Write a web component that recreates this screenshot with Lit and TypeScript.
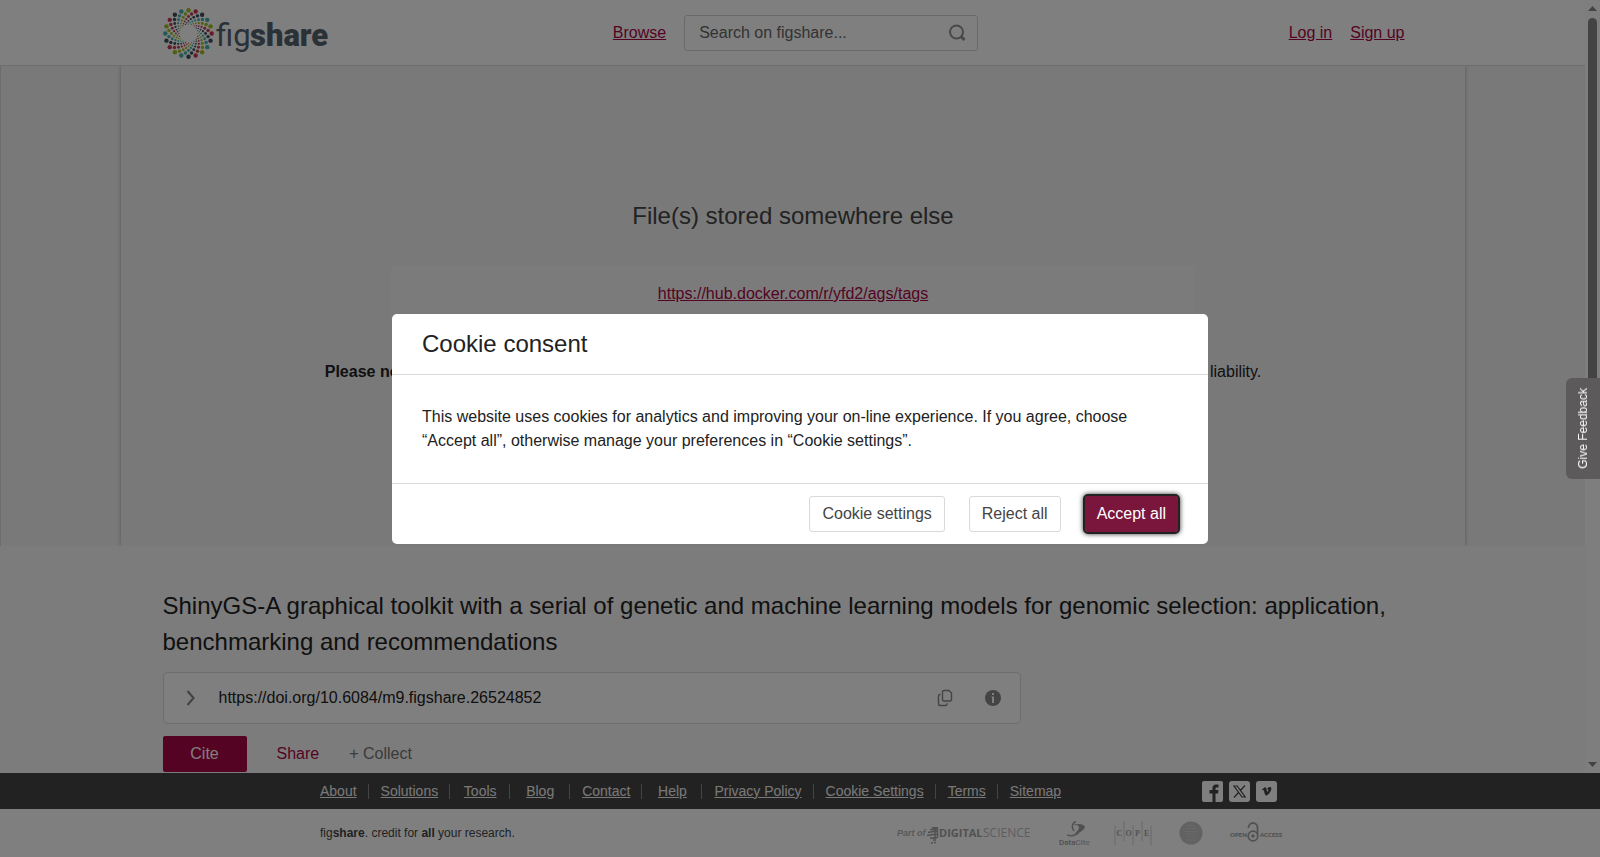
import { LitElement, html, css, svg } from "lit";
import { customElement } from "lit/decorators.js";

const WHEEL_COLORS = ["#a3c01c", "#c93a4e", "#3e4f5e", "#45b3ad"];
const RINGS = [
  { r: 23.2, dot: 2.2 },
  { r: 19.8, dot: 1.7 },
  { r: 17, dot: 1.4 },
  { r: 14.6, dot: 1.1 },
  { r: 12.6, dot: 0.9 },
  { r: 10.9, dot: 0.7 },
  { r: 9.5, dot: 0.6 },
];

@customElement("figshare-logo")
export class FigshareLogo extends LitElement {
  static styles = css`
    :host { display: block; line-height: 0; }
    .light { font: 400 31px Roboto, sans-serif; fill: #55636f; }
    .bold { font: 900 31px Roboto, sans-serif; fill: #55636f; }
  `;

  render() {
    const dots = RINGS.flatMap((ring, k) =>
      Array.from({ length: 20 }, (_, i) => {
        const a = ((i * 18 - k * 9) * Math.PI) / 180;
        return svg`<circle
          cx=${(25.5 + ring.r * Math.sin(a)).toFixed(2)}
          cy=${(26.5 - ring.r * Math.cos(a)).toFixed(2)}
          r=${ring.dot} fill=${WHEEL_COLORS[i % 4]}></circle>`;
      })
    );
    return html`<svg width="170" height="52" viewBox="0 0 170 52" role="img" aria-label="figshare">
      ${dots}
      <text class="light" x="53" y="39">fig</text>
      <text class="bold" x="87" y="39">share</text>
    </svg>`;
  }
}

@customElement("partner-logos")
export class PartnerLogos extends LitElement {
  static styles = css`
    :host { display: flex; align-items: center; }
    svg { display: block; overflow: visible; }
    .ds { margin-right: 25px; }
    .dc { margin-right: 22px; }
    .cope { margin-right: 27px; }
    .seal { margin-right: 27px; }
    .it { font: italic 700 9px "Liberation Sans", sans-serif; fill: #b4b4b4; }
    .dig { font: 700 11px "Open Sans", sans-serif; fill: #a3a3a3; }
    .sci { font: 400 12px "Open Sans", sans-serif; fill: #bcbcbc; }
    .data { font: 500 8px Roboto, sans-serif; fill: #a0a0a0; }
    .cite { fill: #bababa; }
    .serif { font: 700 8px "Liberation Serif", serif; fill: #a6a6a6; }
    .oa { font: 800 6px Lato, sans-serif; fill: #a3a3a3; }
  `;

  render() {
    return html`
      <svg class="ds" width="137" height="26" viewBox="0 0 137 26" role="img" aria-label="Part of Digital Science">
        <text class="it" x="0" y="16">Part of</text>
        <g stroke="#a3a3a3" stroke-width="1.4" fill="none">
          <path d="M33 9.5h8M31 12.5l5-1h5M30 15.5l6-1h5M33 18h7M36 20h3M34 23h2M37 22.5h2M35 7.800h6"></path>
          <path d="M38 8v11M40.5 8v10"></path>
        </g>
        <text class="dig" x="42" y="17">DIGITAL</text>
        <text class="sci" x="86" y="17">SCIENCE</text>
      </svg>
      <svg class="dc" width="33" height="27" viewBox="0 0 33 27" role="img" aria-label="DataCite">
        <path d="M17 1.5c-4 1.500-5 6-2 9.500" fill="none" stroke="#a0a0a0" stroke-width="1.600"></path>
        <path d="M14 5c5-2 11-1 12 2-1 3.500-7 6.500-11 8 2-3 5-5 5-7.500s-3-2.500-6-2.500z" fill="#a0a0a0"></path>
        <path d="M8 15c4 1.500 9 .5 12-2.500" fill="none" stroke="#a8a8a8" stroke-width="1.500"></path>
        <text class="data" x="0" y="25">Data<tspan class="cite">Cite</tspan></text>
      </svg>
      <svg class="cope" width="38" height="26" viewBox="0 0 38 26" role="img" aria-label="COPE">
        <path d="M1 5.500v20M10 1v20M19 5.500v20M28 1v20M37 5.500v20" stroke="#d2d2d2" stroke-width="1"></path>
        <text class="serif" x="2.500" y="16">C</text>
        <text class="serif" x="11.500" y="16">O</text>
        <text class="serif" x="21" y="16">P</text>
        <text class="serif" x="30" y="16">E</text>
      </svg>
      <svg class="seal" width="24" height="26" viewBox="0 0 24 26" role="img" aria-label="Data seal">
        <circle cx="12" cy="13" r="11.500" fill="#c4c4c4"></circle>
        <path d="M9 5.500h6M7.500 8.500h9M5.500 11.500h13M5.500 14h13M8 17h8M7 20h10" stroke="#d6d6d6" stroke-width="1.200" stroke-dasharray="2 .6"></path>
      </svg>
      <svg width="50" height="26" viewBox="0 0 50 26" role="img" aria-label="Open Access">
        <text class="oa" x="0" y="17">OPEN</text>
        <g fill="none" stroke="#a3a3a3" stroke-width="1.800">
          <circle cx="23" cy="16" r="4.800"></circle>
          <path d="M18.500 8V7.500a4.500 4.500 0 0 1 9 0V14"></path>
        </g>
        <circle cx="23" cy="16" r="1.800" fill="#a3a3a3"></circle>
        <text class="oa" x="30" y="17">ACCESS</text>
      </svg>
    `;
  }
}

@customElement("cookie-dialog")
export class CookieDialog extends LitElement {
  static styles = css`
    :host {
      position: fixed; inset: 0; display: grid; place-items: center;
      background: rgba(0, 0, 0, 0.5);
    }
    .dialog { width: 816px; max-width: calc(100% - 32px); background: #fff; border-radius: 5px; color: #222; }
    .title {
      margin: 0; padding: 12px 30px; font-size: 24px; line-height: 36px; font-weight: 400;
      border-bottom: 1px solid #d9d9d9;
    }
    .text { margin: 0; padding: 30px; line-height: 24px; }
    .actions {
      display: flex; justify-content: flex-end; gap: 24px; padding: 12px 30px;
      border-top: 1px solid #d9d9d9;
    }
    .button {
      height: 36px; padding: 0 12px; border: 1px solid #d9d9d9; border-radius: 3px;
      background: #fff; color: #454545; font: inherit;
    }
    .primary {
      border: 0; background: #7a163b; color: #fff;
      outline: 2px solid #222; outline-offset: 0; box-shadow: 0 0 5px 2px rgba(0, 0, 0, 0.8);
    }
  `;

  render() {
    return html`
      <section class="dialog" role="dialog" aria-modal="true" aria-labelledby="title">
        <h2 class="title" id="title">Cookie consent</h2>
        <p class="text">
          This website uses cookies for analytics and improving your on-line experience. If you agree, choose “Accept
          all”, otherwise manage your preferences in “Cookie settings”.
        </p>
        <div class="actions">
          <button class="button">Cookie settings</button>
          <button class="button">Reject all</button>
          <button class="button primary">Accept all</button>
        </div>
      </section>
    `;
  }
}

const FOOTER_LINKS = [
  "About", "Solutions", "Tools", "Blog", "Contact", "Help",
  "Privacy Policy", "Cookie Settings", "Terms", "Sitemap",
];

@customElement("app-root")
export class AppRoot extends LitElement {
  static styles = css`
    :host {
      display: flex; flex-direction: column; height: 100vh; overflow: hidden;
      font: 16px/24px "Liberation Sans", Arial, sans-serif; color: #222; background: #f8f8f8;
    }
    * { box-sizing: border-box; }
    a { color: #a90745; }
    svg { display: block; }

    .viewport { flex: 1; min-height: 0; display: flex; }
    .page { flex: 1; min-width: 0; overflow: hidden; }
    .wrap { max-width: 1260px; margin: 0 auto; }

    .header { background: #fff; border-bottom: 1px solid #dadada; }
    .bar { display: grid; grid-template-columns: 1fr auto 1fr; align-items: center; height: 65px; }
    .center { display: flex; align-items: center; gap: 18px; padding-left: 6px; }
    .search { position: relative; display: block; }
    .field {
      display: block; width: 294px; height: 36px; padding: 0 42px 0 14px; font: inherit;
      border: 1px solid #d5d5d5; border-radius: 3px; background: #fff;
    }
    .field::placeholder { color: #666; opacity: 1; }
    .glass { position: absolute; right: 12px; top: 9px; }
    .account { display: flex; justify-content: flex-end; gap: 18px; padding-right: 18px; }

    .preview { display: flex; height: 480px; background: #f3f3f3; overflow: hidden; }
    .side { width: 121px; flex: none; border-left: 1px solid #dadada; }
    .side.right { width: 120px; border: 0; }
    .stage {
      flex: 1; min-width: 0; display: flex; flex-direction: column; align-items: center;
      padding-top: 132px; box-shadow: 0 0 4px rgba(0, 0, 0, 0.3);
    }
    .stage-title { margin: 0; font-size: 24px; line-height: 36px; font-weight: 400; color: #444; }
    .linkbox {
      width: 804px; max-width: 100%; margin: 32px 0 24px; padding: 16px 24px 18px; text-align: center;
      background: #f6f6f6;
    }
    .note { margin: 0; padding-top: 12px; }

    .title { margin: 0; padding-top: 42px; font-size: 24px; line-height: 36px; font-weight: 400; }
    .doi {
      display: flex; align-items: center; width: 858px; max-width: 100%; height: 52px; margin: 12px 0;
      padding: 0 18px 0 22px; border: 1px solid #dadada; border-radius: 5px; background: #fff;
    }
    .doi-text { flex: 1; padding-left: 23px; }
    .icon { border: 0; background: none; padding: 0; margin: 0; }
    .doi .icon + .icon { margin-left: 31px; }
    .actions { display: flex; align-items: center; height: 36px; }
    .cite {
      height: 36px; width: 84px; border: 0; border-radius: 2px; background: #ab0645; color: #fff; font: inherit;
    }
    .plain { border: 0; background: none; padding: 0; font: inherit; color: #a90745; margin-left: 30px; }
    .muted { color: #777; }

    .scrollbar {
      flex: none; width: 15px; display: flex; flex-direction: column; align-items: center;
      padding: 6px 0; gap: 7px; background: #fcfcfc;
    }
    .thumb { flex: none; width: 9px; height: 384px; border-radius: 5px; background: #868686; }
    .down { margin-top: auto; }

    .links-bar { background: #444; }
    .footer-wrap { display: flex; align-items: center; justify-content: space-between; max-width: 960px; margin: 0 auto; }
    .links-bar .footer-wrap { height: 36px; }
    .links { display: flex; list-style: none; margin: 0 0 0 -12px; padding: 0; font-size: 14px; line-height: 15px; }
    .item { min-width: 60px; padding: 0 11px 0 12px; text-align: center; border-right: 1px solid #888; white-space: nowrap; }
    .item:last-child { border-right: 0; }
    .item a { color: #f2f2f2; }
    .social { display: flex; gap: 6px; padding-right: 3px; }
    .credits { background: #fff; }
    .credits .footer-wrap { height: 48px; }
    .credit { margin: 0; font-size: 12px; line-height: 18px; color: #444; }

    .feedback {
      position: fixed; right: 0; top: 378px; z-index: 2; width: 34px; height: 101px; padding: 4px 0 0;
      border: 0; border-radius: 6px 0 0 6px; background: #5c5a5b; color: #fff;
      font: 12px/18px "Liberation Sans", Arial, sans-serif;
    }
    .feedback span { display: inline-block; writing-mode: vertical-rl; transform: rotate(180deg); }
  `;

  render() {
    return html`
      <div class="viewport">
        <div class="page">
          <header class="header">
            <div class="wrap bar">
              <figshare-logo></figshare-logo>
              <div class="center">
                <a href="#browse">Browse</a>
                <label class="search">
                  <input class="field" type="search" aria-label="Search on figshare" placeholder="Search on figshare..." />
                  <svg class="glass" width="18" height="18" viewBox="0 0 18 18" fill="none" stroke="#909090">
                    <circle cx="8.500" cy="8" r="6.500" stroke-width="2"></circle>
                    <path d="M13 12.500l3.500 3.500" stroke-width="3"></path>
                  </svg>
                </label>
              </div>
              <nav class="account"><a href="#login">Log in</a><a href="#signup">Sign up</a></nav>
            </div>
          </header>

          <section class="preview">
            <div class="side"></div>
            <div class="stage">
              <h2 class="stage-title">File(s) stored somewhere else</h2>
              <div class="linkbox"><a href="https://hub.docker.com/r/yfd2/ags/tags">https://hub.docker.com/r/yfd2/ags/tags</a></div>
              <p class="note">
                <b>Please note:</b> Linked content is NOT stored on Figshare and we can't guarantee its availability,
                quality, security or accept any liability.
              </p>
            </div>
            <div class="side right"></div>
          </section>

          <main class="wrap">
            <h1 class="title">
              ShinyGS-A graphical toolkit with a serial of genetic and machine learning models for genomic selection:
              application, benchmarking and recommendations
            </h1>
            <div class="doi">
              <button class="icon" aria-label="Expand">
                <svg width="10" height="16" viewBox="0 0 10 16" fill="none" stroke="#888" stroke-width="2.200">
                  <path d="M1.500 1l6 7-6 7"></path>
                </svg>
              </button>
              <span class="doi-text">https://doi.org/10.6084/m9.figshare.26524852</span>
              <button class="icon" aria-label="Copy">
                <svg width="16" height="18" viewBox="0 0 16 18" fill="none" stroke="#888" stroke-width="1.400">
                  <path d="M7 1.500h5l2.500 2.500v6.500a1.500 1.500 0 0 1-1.500 1.500H7a1.500 1.500 0 0 1-1.500-1.500V3A1.500 1.500 0 0 1 7 1.500z"></path>
                  <path d="M3.500 5.500H3A1.500 1.500 0 0 0 1.500 7v8A1.500 1.500 0 0 0 3 16.500h5.500A1.500 1.500 0 0 0 10 15v-.8"></path>
                </svg>
              </button>
              <button class="icon" aria-label="Information">
                <svg width="18" height="18" viewBox="0 0 18 18">
                  <circle cx="9" cy="9" r="8" fill="#888"></circle>
                  <path d="M8 4h2v2H8zM7.500 7.500H10V14H8V8.500h-.5z" fill="#fff"></path>
                </svg>
              </button>
            </div>
            <div class="actions">
              <button class="cite">Cite</button>
              <button class="plain">Share</button>
              <button class="plain muted">+ Collect</button>
            </div>
          </main>
        </div>
        <div class="scrollbar" aria-hidden="true">
          <svg width="9" height="5" viewBox="0 0 9 5"><path d="M0 5L4.500 0 9 5z" fill="#868686"></path></svg>
          <div class="thumb"></div>
          <svg class="down" width="9" height="5" viewBox="0 0 9 5"><path d="M0 0h9L4.500 5z" fill="#868686"></path></svg>
        </div>
      </div>

      <footer>
        <div class="links-bar">
          <div class="footer-wrap">
            <ul class="links">
              ${FOOTER_LINKS.map((t) => html`<li class="item"><a href="#">${t}</a></li>`)}
            </ul>
            <div class="social">
              <a href="#" aria-label="Facebook"><svg width="21" height="21" viewBox="0 0 21 21">
                <rect width="21" height="21" rx="2" fill="#fff"></rect>
                <path d="M10.500 21v-8.500H7.500V9h3V7c0-2.300 1.300-3.500 3.500-3.500h2.500v3h-1.700c-.9 0-1.300.4-1.300 1.200V9h3l-.4 3.500h-2.600V21z" fill="#444"></path>
              </svg></a>
              <a href="#" aria-label="X"><svg width="21" height="21" viewBox="0 0 21 21">
                <rect width="21" height="21" rx="3" fill="#fff"></rect>
                <path d="M5 5h3.200l8 11H13zM16 4.500l-5 5.500M9.500 11.500L5 16.500" fill="none" stroke="#444" stroke-width="1.200"></path>
              </svg></a>
              <a href="#" aria-label="Vimeo"><svg width="21" height="21" viewBox="0 0 21 21">
                <rect width="21" height="21" rx="3" fill="#fff"></rect>
                <path d="M6 8.500l2.500-2c1.200-.6 1.800.2 2 1.500l.6 3c1-1.200 1.600-2.200 1-2.600-.3-.2-.7 0-1 .1.500-1.700 1.600-2.500 2.900-2.400 1.500.2 1.600 1.600 1 3.200-.9 2.300-3.200 5.200-4.700 5.200-1.200 0-1.500-1.500-2-3.500-.3-1.300-.5-2.100-.9-2.100l-.8.400z" fill="#444"></path>
              </svg></a>
            </div>
          </div>
        </div>
        <div class="credits">
          <div class="footer-wrap">
            <p class="credit">fig<b>share</b>. credit for <b>all</b> your research.</p>
            <partner-logos></partner-logos>
          </div>
        </div>
      </footer>

      <cookie-dialog></cookie-dialog>
      <button class="feedback"><span>Give Feedback</span></button>
    `;
  }
}
